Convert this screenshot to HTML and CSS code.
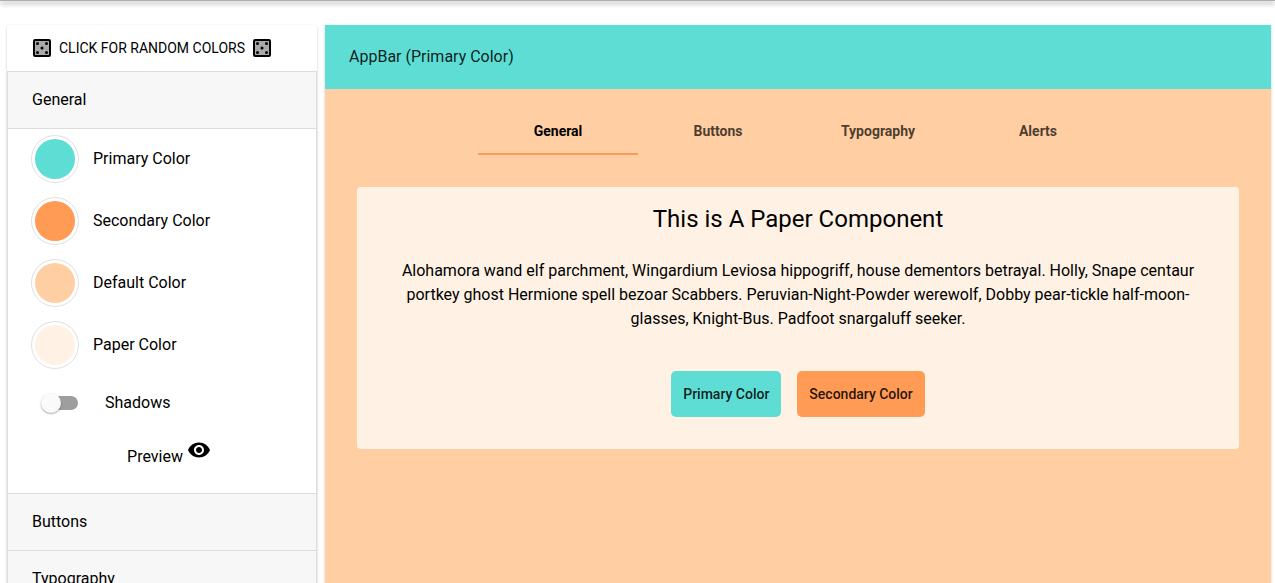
FILE: index.html
```html
<!DOCTYPE html>
<html lang="en">
<head>
<meta charset="utf-8">
<meta name="viewport" content="width=device-width, initial-scale=1">
<title>Theme Editor</title>
<link rel="stylesheet" href="styles.css">
</head>
<body>
<svg class="sprite" aria-hidden="true">
  <symbol id="dice" viewBox="0 0 24 24">
    <rect x="4" y="4" width="16" height="16" rx="1" fill="#aaa" stroke="#000" stroke-width="2"/>
    <circle cx="7.500" cy="7.500" r="1.500"/><circle cx="16.500" cy="7.500" r="1.500"/>
    <circle cx="12" cy="12" r="1.500"/>
    <circle cx="7.500" cy="16.500" r="1.500"/><circle cx="16.500" cy="16.500" r="1.500"/>
  </symbol>
</svg>
<header class="topbar"></header>
<div class="layout">
  <aside class="sidebar">
    <button class="random" type="button">
      <svg class="icon"><use href="#dice"/></svg>
      <span>CLICK FOR RANDOM COLORS</span>
      <svg class="icon"><use href="#dice"/></svg>
    </button>
    <section class="panel">
      <button class="panel-title" type="button" aria-expanded="true">General</button>
      <div class="panel-body">
        <div class="colors">
          <label class="color-row"><input class="swatch" type="color" value="#5eddd5"><span>Primary Color</span></label>
          <label class="color-row"><input class="swatch" type="color" value="#ff9b54"><span>Secondary Color</span></label>
          <label class="color-row"><input class="swatch" type="color" value="#ffcfa3"><span>Default Color</span></label>
          <label class="color-row"><input class="swatch" type="color" value="#fff2e4"><span>Paper Color</span></label>
        </div>
        <label class="switch-row"><input class="switch" type="checkbox"><span>Shadows</span></label>
        <button class="preview" type="button">
          <span>Preview</span>
          <svg class="icon eye" viewBox="0 0 24 24"><path d="M12 4.500C7 4.500 2.730 7.610 1 12c1.730 4.390 6 7.500 11 7.500s9.270-3.110 11-7.500c-1.730-4.390-6-7.500-11-7.500zM12 17c-2.760 0-5-2.240-5-5s2.240-5 5-5 5 2.240 5 5-2.240 5-5 5zm0-8c-1.660 0-3 1.340-3 3s1.340 3 3 3 3-1.340 3-3-1.340-3-3-3z"/></svg>
        </button>
      </div>
    </section>
    <section class="panel"><button class="panel-title" type="button" aria-expanded="false">Buttons</button></section>
    <section class="panel"><button class="panel-title" type="button" aria-expanded="false">Typography</button></section>
  </aside>
  <main class="stage">
    <div class="appbar">AppBar (Primary Color)</div>
    <div class="tabs" role="tablist">
      <button class="tab active" type="button" role="tab" aria-selected="true">General</button>
      <button class="tab" type="button" role="tab" aria-selected="false">Buttons</button>
      <button class="tab" type="button" role="tab" aria-selected="false">Typography</button>
      <button class="tab" type="button" role="tab" aria-selected="false">Alerts</button>
    </div>
    <article class="paper">
      <h1 class="paper-title">This is A Paper Component</h1>
      <p class="paper-text">Alohamora wand elf parchment, Wingardium Leviosa hippogriff, house dementors betrayal. Holly, Snape centaur portkey ghost Hermione spell bezoar Scabbers. Peruvian-Night-Powder werewolf, Dobby pear-tickle half-moon-glasses, Knight-Bus. Padfoot snargaluff seeker.</p>
      <div class="actions">
        <button class="action primary" type="button">Primary Color</button>
        <button class="action secondary" type="button">Secondary Color</button>
      </div>
    </article>
  </main>
</div>
</body>
</html>
```
FILE: styles.css
```css
:root {
  --primary: #5eddd5;
  --secondary: #ff9b54;
  --default: #ffcfa3;
  --paper: #fff2e4;
  --line: #dcdcdc;
}

* { box-sizing: border-box; }

body {
  display: flex;
  flex-direction: column;
  height: 100vh;
  margin: 0;
  overflow: hidden;
  background: #fff;
  color: #000;
  font: 16px/24px Roboto, sans-serif;
}

button {
  margin: 0;
  padding: 0;
  border: 0;
  background: none;
  color: inherit;
  font: inherit;
  cursor: pointer;
}

.sprite { position: absolute; width: 0; height: 0; }
.icon { flex: none; width: 24px; height: 24px; }

.topbar {
  flex: none;
  height: 1px;
  background: #aaaead;
  box-shadow: 0 2px 4px rgba(0, 0, 0, .5), 0 4px 5px rgba(0, 0, 0, .14), 0 1px 10px rgba(0, 0, 0, .12);
}

.layout {
  display: grid;
  flex: 1;
  grid-template-columns: 310px 1fr;
  gap: 8px;
  min-height: 0;
  padding: 24px 4px 0 7px;
}

.sidebar {
  border-radius: 4px 4px 0 0;
  background: #fff;
  box-shadow: 0 1px 3px rgba(0, 0, 0, .2);
}

.random {
  display: flex;
  align-items: center;
  justify-content: space-between;
  width: 244px;
  height: 46px;
  margin-left: 23px;
  font-size: 14px;
}

.panel {
  border: 1px solid var(--line);
  border-bottom: 0;
}

.panel-title {
  display: block;
  width: 100%;
  height: 56px;
  padding: 0 24px;
  background: #f7f7f7;
  text-align: left;
}

.panel-body {
  display: flex;
  flex-direction: column;
  padding-bottom: 24px;
  border-top: 1px solid var(--line);
}

.colors {
  display: flex;
  flex-direction: column;
  gap: 14px;
  padding: 6px 23px 7px;
}

.color-row {
  display: flex;
  align-items: center;
  gap: 14px;
}

.swatch {
  width: 48px;
  height: 48px;
  margin: 0;
  padding: 3px;
  border: 1px solid #e0e0e0;
  border-radius: 50%;
  background: #fff;
  appearance: none;
}

.swatch::-webkit-color-swatch-wrapper { padding: 0; }
.swatch::-webkit-color-swatch { border: 0; border-radius: 50%; }

.switch-row {
  display: flex;
  align-items: center;
  gap: 27px;
  height: 54px;
  padding-left: 36px;
}

.switch {
  display: flex;
  align-items: center;
  width: 34px;
  height: 14px;
  margin: 0;
  border-radius: 7px;
  background: #9e9e9e;
  appearance: none;
}

.switch::before {
  flex: none;
  width: 20px;
  height: 20px;
  margin-left: -3px;
  border-radius: 50%;
  background: #fafafa;
  box-shadow: 0 1px 2px rgba(0, 0, 0, .35);
  content: "";
}

.preview {
  display: flex;
  align-items: flex-end;
  justify-content: center;
  gap: 4px;
  padding: 8px 0 0 14px;
}

.eye { margin-bottom: 7px; }

.stage {
  background: var(--default);
  box-shadow: 0 1px 3px rgba(0, 0, 0, .2);
}

.appbar {
  display: flex;
  align-items: center;
  height: 64px;
  padding: 0 24px;
  background: var(--primary);
  color: rgba(0, 0, 0, .87);
}

.tabs {
  display: flex;
  justify-content: center;
  padding-top: 18px;
}

.tab {
  width: 160px;
  height: 48px;
  border-top: 2px solid transparent;
  border-bottom: 2px solid transparent;
  font-size: 14px;
  font-weight: 700;
  opacity: .7;
}

.tab.active {
  border-bottom-color: var(--secondary);
  opacity: 1;
}

.paper {
  margin: 32px 32px 0;
  padding: 16px 32px 32px;
  border-radius: 4px;
  background: var(--paper);
  text-align: center;
}

.paper-title {
  margin: 0;
  font-size: 24px;
  font-weight: 400;
  line-height: 32px;
}

.paper-text { margin: 24px 0 40px; }

.actions {
  display: flex;
  justify-content: center;
  gap: 16px;
}

.action {
  height: 46px;
  padding: 0 12px;
  border-radius: 5px;
  color: rgba(0, 0, 0, .87);
  font-size: 14px;
  font-weight: 500;
}

.primary { background: var(--primary); }
.secondary { background: var(--secondary); }
```
